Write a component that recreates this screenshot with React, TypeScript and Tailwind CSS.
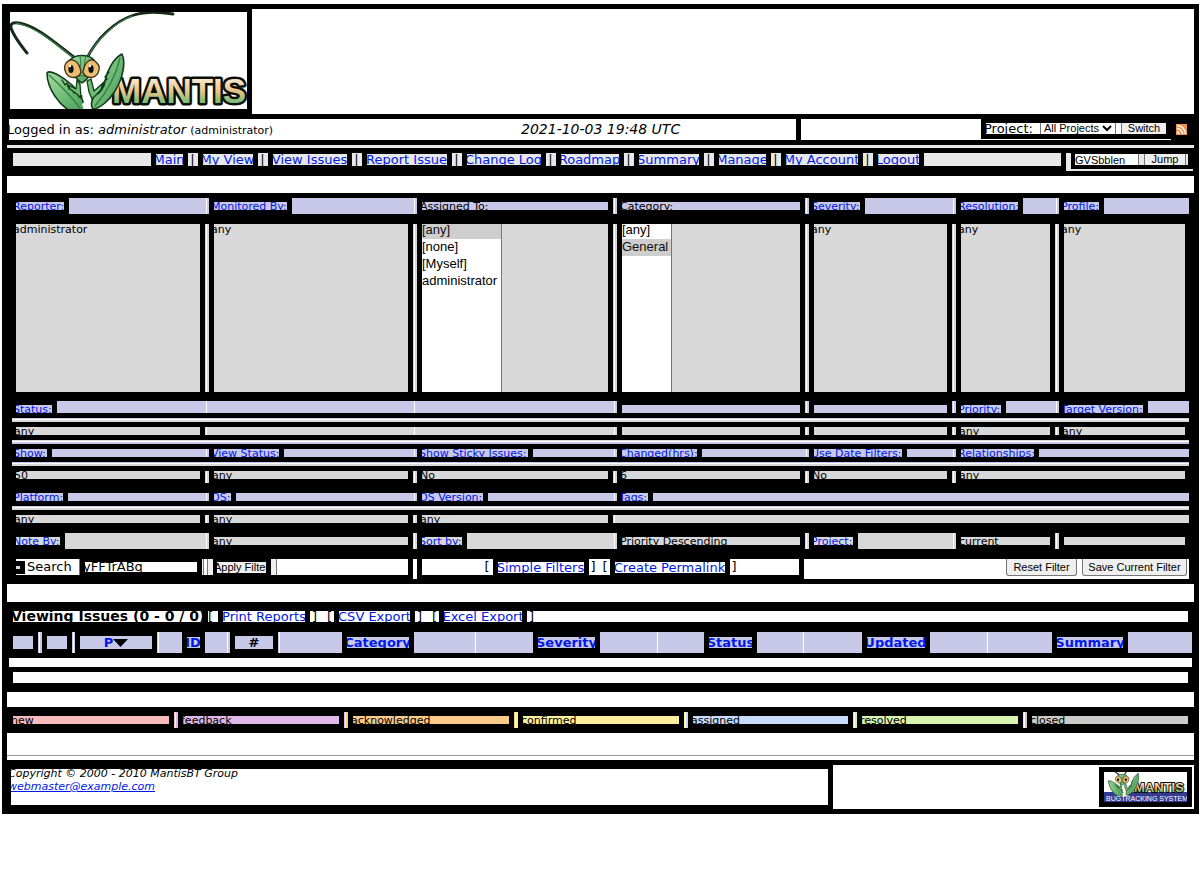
import React from "react";

const LAV = "bg-[#c8c8e8]";
const GRAY = "bg-[#d8d8d8]";
const BAR = "bg-[#e8e8e8]";

type CellData = {
  kind: "link" | "text" | "fill" | "list";
  text?: string;
  w?: string;
  span?: string;
  options?: string[];
  selected?: string;
};

type CellProps = CellData & {
  tone: string;
  first: boolean;
  last: boolean;
  box: string;
};

function Cell({ kind, text, w, span = "", options = [], selected = "", tone, first, last, box }: CellProps) {
  if (kind === "fill") {
    return <div className={`${tone} ${span} ${last ? "" : "border-r border-white"}`} />;
  }
  return (
    <div className={`flex min-w-0 bg-black ${span} ${last ? "" : "border-r border-white"}`}>
      {first ? <div className="w-1 shrink-0" /> : <div className={`mr-[5px] w-0.5 shrink-0 ${tone}`} />}
      {kind === "link" && (
        <>
          <a
            href="#filter"
            className={`flex h-2 shrink-0 items-center overflow-hidden text-[11px] leading-[11px] whitespace-nowrap text-[#0018e8] ${tone} ${w} ${box}`}
          >
            <span className="-ml-[3px]">{text}</span>
          </a>
          <div className={`ml-[5px] grow ${tone}`} />
        </>
      )}
      {kind === "text" && (
        <div className={`flex min-w-0 grow overflow-hidden text-[11px] leading-[11px] whitespace-nowrap ${tone} ${box}`}>
          <span className="-ml-0.5">{text}</span>
        </div>
      )}
      {kind === "list" && (
        <div className={`min-w-0 grow overflow-hidden ${tone}`}>
          <select
            multiple
            aria-label={text}
            defaultValue={[selected]}
            className={`-mt-0.5 block h-[170px] overflow-hidden border-r border-[#767676] bg-white p-0 font-['Liberation_Sans',Arial,sans-serif] text-[13px] leading-[17px] outline-none ${w}`}
          >
            {options.map((o) => (
              <option key={o} className="h-[17px] min-h-0 p-0 leading-[17px]">
                {o}
              </option>
            ))}
          </select>
        </div>
      )}
      {kind !== "link" && (last ? <div className="w-1 shrink-0" /> : <div className={`ml-[5px] w-px shrink-0 ${tone}`} />)}
    </div>
  );
}

type RowProps = { cells: CellData[]; tone: string; height: string; box?: string };

function FilterRow({ cells, tone, height, box = "h-2 items-center self-center" }: RowProps) {
  return (
    <div className={`mx-[5px] grid grid-cols-[195fr_208fr_200fr_192fr_147fr_103fr_132fr] ${height}`}>
      {cells.map((c, i) => (
        <Cell key={i} {...c} tone={tone} first={i === 0} last={i === cells.length - 1} box={box} />
      ))}
    </div>
  );
}

function Rule({ top, bottom }: { top: string; bottom: string }) {
  return (
    <div className="mx-[5px] my-[5px]">
      <div className={`h-px ${top}`} />
      <div className="h-px bg-white" />
      <div className={`h-0.5 ${bottom}`} />
    </div>
  );
}

const link = (text: string, w: string, span?: string): CellData => ({ kind: "link", text, w, span });
const value = (text: string, span?: string): CellData => ({ kind: "text", text, span });
const fill = (span?: string): CellData => ({ kind: "fill", span });

const menu = [
  { t: "Main", w: "w-[27px]" },
  { t: "My View", w: "w-[50px]" },
  { t: "View Issues", w: "w-[74px]" },
  { t: "Report Issue", w: "w-[80px]" },
  { t: "Change Log", w: "w-[74px]" },
  { t: "Roadmap", w: "w-[58px]" },
  { t: "Summary", w: "w-[60px]" },
  { t: "Manage", w: "w-[47px]" },
  { t: "My Account", w: "w-[72px]" },
  { t: "Logout", w: "w-[41px]" },
];

const legend = [
  { t: "new", tone: "bg-[#f8bcbc]" },
  { t: "feedback", tone: "bg-[#ddb8e8]" },
  { t: "acknowledged", tone: "bg-[#fbcb8a]" },
  { t: "confirmed", tone: "bg-[#fff09c]" },
  { t: "assigned", tone: "bg-[#c8dcff]" },
  { t: "resolved", tone: "bg-[#d8f2b0]" },
  { t: "closed", tone: "bg-[#cbcac6]" },
];

const columns = [
  { t: "", col: "w-[31px]", plain: true, w: "" },
  { t: "", col: "w-[34px]", plain: true, w: "" },
  { t: "P", col: "w-[85px]", plain: true, w: "" },
  { t: "ID", col: "w-[69px]", plain: false, w: "w-[13px]" },
  { t: "#", col: "w-[52px]", plain: true, w: "" },
  { t: "Category", col: "w-[196px]", plain: false, w: "w-[62px]" },
  { t: "Severity", col: "w-[182px]", plain: false, w: "w-[57px]" },
  { t: "Status", col: "w-[146px]", plain: false, w: "w-[43px]" },
  { t: "Updated", col: "w-[184px]", plain: false, w: "w-[58px]" },
  { t: "Summary", col: "w-[204px]", plain: false, w: "w-[66px]" },
];

function Clip({ text, w, tone = "bg-white", h = "h-[11px]" }: { text: string; w: string; tone?: string; h?: string }) {
  return (
    <a
      href="#page"
      className={`mx-[5px] flex shrink-0 items-center justify-center self-center overflow-hidden text-[13px] leading-[15px] whitespace-nowrap text-[#0018e8] ${h} ${tone} ${w}`}
    >
      <span>{text}</span>
    </a>
  );
}

function MantisArt() {
  return (
    <g strokeLinecap="round" strokeLinejoin="round">
      <path d="M17 41C10 32 4 25 1 16C0 11 4 10 9 11C27 14 45 31 65 46" fill="none" stroke="#142a18" strokeWidth="3" />
      <path d="M6 11C27 15 45 32 64 46" fill="none" stroke="#3f7d4a" strokeWidth="1.2" />
      <path d="M77 46C86 28 104 9 124 3C137 -1 150 0 163 2" fill="none" stroke="#142a18" strokeWidth="2.8" />
      <path d="M78 44C87 28 104 11 122 4" fill="none" stroke="#3f7d4a" strokeWidth="1.2" />
      <path d="M37 61C40 57 53 65 62 73C66 77 69 80 71 84L73 90C75 96 77 97 79 102L62 100C50 94 37 77 37 61Z" fill="url(#leaf)" stroke="#123c1c" strokeWidth="1.6" />
      <path d="M39 63C49 72 61 84 70 96" fill="none" stroke="#2f7f3e" strokeWidth="1.2" />
      <path d="M52 68l3 5 2-2 2 6 3-2 2 6 3-1 2 5 3-1" fill="none" stroke="#123c1c" strokeWidth="1.4" />
      <path d="M78 87L72 92L75 102L88 102L86 88Z" fill="#fff" stroke="none" />
      <path d="M112 42C116 50 113 66 105 79C99 89 89 97 83 97C80 94 82 86 85 83C92 80 94 75 95 69C97 58 104 46 112 42Z" fill="url(#leaf)" stroke="#123c1c" strokeWidth="1.6" />
      <path d="M110 46C106 64 97 80 85 94" fill="none" stroke="#2f7f3e" strokeWidth="1.2" />
      <path d="M99 60l-4 5 2 2-4 4 1 3-5 3 1 3-5 2" fill="none" stroke="#123c1c" strokeWidth="1.4" />
      <path d="M67 68L70 72L71 86L67 82L60 77L58 73L66 77Z" fill="#70bd74" stroke="#123c1c" strokeWidth="1.3" />
      <path d="M77 69L81 67L84 79L93 71L91 78L82 87L79 80Z" fill="#70bd74" stroke="#123c1c" strokeWidth="1.3" />
      <path d="M60 48C65 42 79 42 84 48C84 58 80 66 72 71C64 66 60 58 60 48Z" fill="url(#leaf)" stroke="#123c1c" strokeWidth="1.4" />
      <path d="M70 44C71 50 71 54 69 58M76 44C74 50 74 54 76 58M64 66Q72 61 81 66" fill="none" stroke="#2f7f3e" strokeWidth="1" />
      <path d="M56 51C61 45 69 48 71 60C69 67 59 67 56 61C54 57 54 54 56 51Z" fill="#edbd74" stroke="#3e2c14" strokeWidth="1.3" />
      <path d="M87 51C82 45 75 48 73 60C75 67 85 67 88 61C90 57 90 54 87 51Z" fill="#edbd74" stroke="#3e2c14" strokeWidth="1.3" />
      <ellipse cx="61" cy="57" rx="2.6" ry="4" fill="#111" />
      <ellipse cx="81" cy="57" rx="2.6" ry="4" fill="#111" />
      <circle cx="60" cy="54" r="1.2" fill="#fff" />
      <circle cx="80" cy="54" r="1.2" fill="#fff" />
    </g>
  );
}

function Word({ size, x, y, stroke }: { size: string; x: number; y: number; stroke: number }) {
  return (
    <text
      x={x}
      y={y}
      className={`font-['Liberation_Sans',Arial,sans-serif] font-bold ${size}`}
      fill="url(#word)"
      stroke="#0c0f08"
      strokeWidth={stroke}
      strokeLinejoin="round"
      paintOrder="stroke"
    >
      MANTIS
    </text>
  );
}

function Logo() {
  return (
    <svg viewBox="0 0 237 97" className="mt-[3px] ml-[3px] h-[97px] w-[237px] shrink-0 bg-white" role="img" aria-label="Mantis">
      <defs>
        <linearGradient id="leaf" x1="0" y1="0" x2="1" y2="1">
          <stop offset="0" stopColor="#a5dca0" />
          <stop offset="1" stopColor="#3d9850" />
        </linearGradient>
        <linearGradient id="word" x1="0" y1="0" x2="0" y2="1">
          <stop offset="0.2" stopColor="#fbe8cf" />
          <stop offset="0.5" stopColor="#edc68c" />
          <stop offset="0.8" stopColor="#78bd78" />
        </linearGradient>
      </defs>
      <Word size="text-[35px]" x={102} y={91} stroke={5} />
      <MantisArt />
    </svg>
  );
}

function FooterLogo() {
  return (
    <svg viewBox="0 0 83 30" className="block h-[30px] w-[83px] bg-white" role="img" aria-label="Mantis Bugtracking System">
      <rect y="20" width="83" height="10" fill="#333a90" />
      <Word size="text-[13px]" x={30} y={20} stroke={2} />
      <svg x="3" y="-1" width="33" height="25" viewBox="33 36 84 62">
        <MantisArt />
      </svg>
      <text x="2" y="29" className="font-['Liberation_Sans',Arial,sans-serif] text-[7px]" fill="#fff">
        BUGTRACKING SYSTEM
      </text>
    </svg>
  );
}

export default function App() {
  return (
    <div className="pt-1 pr-px pl-0.5 font-['DejaVu_Sans',Verdana,sans-serif] text-[13px] text-black">
      <main className="bg-black p-[5px]">
        <header>
          <div className="flex h-[105px]">
            <Logo />
            <div className="ml-[5px] grow bg-white" />
          </div>

          <div className="mt-[5px] ml-0.5 grid h-[21px] grid-cols-[787fr_393fr] gap-[5px]">
            <div className="grid grid-cols-[512fr_275fr] items-center overflow-hidden bg-white whitespace-nowrap">
              <div className="-ml-0.5">
                Logged in as: <i>administrator</i> <span className="text-[11px]">(administrator)</span>
              </div>
              <i className="text-[14px]">2021-10-03 19:48 UTC</i>
            </div>
            <div className="flex">
              <div className="grow bg-white" />
              <form className="flex shrink-0 border-b border-white px-[5px] pt-1" onSubmit={(e) => e.preventDefault()}>
                <div className="flex h-[11px] w-[180px] items-center overflow-hidden bg-white">
                  <label htmlFor="project" className="-ml-0.5 w-14 leading-[15px]">
                    Project:
                  </label>
                  <div className="relative h-[11px] w-[76px] border-x border-[#767676]">
                    <select
                      id="project"
                      className="block h-[11px] w-full appearance-none bg-white pl-[3px] font-['Liberation_Sans',Arial,sans-serif] text-[11px] leading-[11px]"
                    >
                      <option>All Projects</option>
                    </select>
                    <svg viewBox="0 0 10 7" className="pointer-events-none absolute top-0.5 right-[3px] h-[7px] w-[10px]">
                      <path d="M1 1L5 5L9 1" fill="none" stroke="#000" strokeWidth="2" />
                    </svg>
                  </div>
                  <button className="ml-[5px] h-[11px] grow border-l border-[#767676] bg-[#efefef] font-['Liberation_Sans',Arial,sans-serif] text-[11px] leading-[11px]">
                    Switch
                  </button>
                </div>
              </form>
              <svg viewBox="0 0 11 11" className="mt-[5px] mr-[7px] ml-[5px] h-[11px] w-[11px] shrink-0" role="img" aria-label="RSS">
                <rect width="11" height="11" fill="#ee924c" />
                <circle cx="2.3" cy="8.7" r="1.2" fill="#fff" />
                <path d="M1 4.5A5.5 5.5 0 0 1 6.5 10M1 1.5A8.5 8.5 0 0 1 9.5 10" fill="none" stroke="#fff" strokeWidth="1.4" />
              </svg>
            </div>
          </div>

          <div className={`mt-[5px] h-[3px] ${BAR}`} />

          <div className="mt-[5px] ml-1.5 flex h-[18px]">
            <nav className="flex h-[13px] grow">
              <div className={`grow ${BAR}`} />
              {menu.map((m, i) => (
                <React.Fragment key={m.t}>
                  {i > 0 && (
                    <div className={`flex w-2.5 shrink-0 justify-center overflow-hidden ${BAR}`}>
                      <span className="leading-[13px]">|</span>
                    </div>
                  )}
                  <Clip text={m.t} w={m.w} tone={BAR} />
                </React.Fragment>
              ))}
              <div className={`grow ${BAR}`} />
            </nav>
            <form
              className="mr-px ml-[5px] w-[127px] shrink-0 border-b-2 border-l-[5px] border-[#e8e8e8] pt-px pl-1"
              onSubmit={(e) => e.preventDefault()}
            >
              <div className={`flex h-[11px] w-[113px] ${BAR}`}>
                <input
                  aria-label="Issue number"
                  defaultValue="GVSbblen"
                  className="h-[11px] w-16 border-r border-[#767676] bg-white p-0 font-['Liberation_Sans',Arial,sans-serif] text-[11px] leading-[11px] outline-none"
                />
                <button className="ml-[5px] h-[11px] w-[42px] border-x border-[#767676] bg-[#efefef] font-['Liberation_Sans',Arial,sans-serif] text-[11px] leading-[11px]">
                  Jump
                </button>
              </div>
            </form>
          </div>
        </header>

        <div className="mt-[5px] h-[17px] bg-white" />

        <section className="mt-[5px]">
          <FilterRow
            tone={LAV}
            height="h-4"
            cells={[
              link("Reporter:", "w-[48px]"),
              link("Monitored By:", "w-[73px]"),
              value("Assigned To:"),
              value("Category:"),
              link("Severity:", "w-[46px]"),
              link("Resolution:", "w-[57px]"),
              link("Profile:", "w-[35px]"),
            ]}
          />
          <div className="h-2.5" />
          <FilterRow
            tone={GRAY}
            height="h-[167px]"
            box="items-start -indent-px"
            cells={[
              value("administrator"),
              value("any"),
              { kind: "list", text: "Assigned To", w: "w-[80px]", options: ["[any]", "[none]", "[Myself]", "administrator"], selected: "[any]" },
              { kind: "list", text: "Category", w: "w-[50px]", options: ["[any]", "General"], selected: "General" },
              value("any"),
              value("any"),
              value("any"),
            ]}
          />
          <div className="h-2.5" />
          <FilterRow
            tone={LAV}
            height="h-3"
            box="h-2 items-center self-end"
            cells={[
              link("Status:", "w-[36px]"),
              fill(),
              fill(),
              value(""),
              value(""),
              link("Priority:", "w-[40px]"),
              link("Target Version:", "w-[79px]"),
            ]}
          />
          <Rule top={LAV} bottom={GRAY} />
          <FilterRow tone={GRAY} height="h-2" cells={[value("any"), fill(), fill(), value(""), value(""), value("any"), value("any")]} />
          <Rule top={GRAY} bottom={LAV} />
          <FilterRow
            tone={LAV}
            height="h-2"
            cells={[
              link("Show:", "w-[31px]"),
              link("View Status:", "w-[65px]"),
              link("Show Sticky Issues:", "w-[106px]"),
              link("Changed(hrs):", "w-[75px]"),
              link("Use Date Filters:", "w-[88px]"),
              link("Relationships:", "w-[73px]", "col-span-2"),
            ]}
          />
          <Rule top={LAV} bottom={GRAY} />
          <FilterRow
            tone={GRAY}
            height="h-3"
            box="h-2 items-center self-start"
            cells={[value("50"), value("any"), value("No"), value("6"), value("No"), value("any", "col-span-2")]}
          />
          <div className="h-2.5" />
          <FilterRow
            tone={LAV}
            height="h-2"
            cells={[
              link("Platform:", "w-[47px]"),
              link("OS:", "w-[17px]"),
              link("OS Version:", "w-[61px]"),
              link("Tags:", "w-[26px]", "col-span-4"),
            ]}
          />
          <Rule top={LAV} bottom={GRAY} />
          <FilterRow tone={GRAY} height="h-2" cells={[value("any"), value("any"), value("any"), fill("col-span-4")]} />
          <div className="h-2.5" />
          <FilterRow
            tone={GRAY}
            height="h-4"
            cells={[
              link("Note By:", "w-[44px]"),
              value("any"),
              link("Sort by:", "w-[40px]"),
              value("Priority Descending"),
              link("Project:", "w-[39px]"),
              value("current"),
              value(""),
            ]}
          />
          <form
            className="mx-[5px] mt-2.5 grid h-5 grid-cols-[401fr_391fr_385fr] whitespace-nowrap"
            onSubmit={(e) => e.preventDefault()}
          >
            <div className="flex h-4 pr-[5px] pl-1">
              <label htmlFor="search" className="flex w-16 shrink-0 items-center border-r border-[#767676] bg-white leading-4">
                <span className="mr-0.5 flex h-[13px] w-[9px] items-center bg-black">
                  <span className="h-[3px] w-1 bg-[#d8d8d8]" />
                </span>
                Search
              </label>
              <input
                id="search"
                defaultValue="yFFTrABq"
                className="mx-[5px] h-2.5 w-28 self-center bg-white p-0 -indent-0.5 text-[13px] leading-[14px] outline-none"
              />
              <div className="flex w-[11px] shrink-0 bg-[#efefef]">
                <div className="ml-px h-4 w-[5px] border-x border-[#767676] bg-white" />
              </div>
              <button className="mr-[5px] ml-1 flex h-[11px] w-[49px] shrink-0 items-center justify-center self-center overflow-hidden bg-[#efefef] font-['Liberation_Sans',Arial,sans-serif] text-[11px] leading-[11px]">
                Apply Filter
              </button>
              <div className="w-1.5 shrink-0 border-r border-[#767676] bg-[#efefef]" />
              <div className="grow bg-white" />
            </div>
            <div className="flex">
              <div className="mr-[5px] w-1 bg-white" />
              <div className="flex h-4 grow pr-[5px] leading-4">
                <div className="grow bg-white pr-[3px] text-right">[</div>
                <Clip text="Simple Filters" w="w-[86px]" />
                <div className="flex w-[21px] shrink-0 justify-between bg-white px-0.5">
                  <span>]</span>
                  <span>[</span>
                </div>
                <Clip text="Create Permalink" w="w-[110px]" />
                <div className="grow bg-white pl-0.5">]</div>
              </div>
            </div>
            <div className="flex items-start justify-end gap-[5px] bg-white pr-0.5 font-['Liberation_Sans',Arial,sans-serif] text-[11px] leading-4">
              <button className="h-[17px] w-[71px] rounded-b-[3px] border border-t-0 border-[#767676] bg-[#efefef]">Reset Filter</button>
              <button className="h-[17px] w-[105px] rounded-b-[3px] border border-t-0 border-[#767676] bg-[#efefef]">
                Save Current Filter
              </button>
            </div>
          </form>
        </section>

        <div className="mt-[5px] h-[18px] bg-white" />

        <section className="px-0.5">
          <div className="mx-1 mt-[9px] flex h-[11px] leading-[11px] whitespace-nowrap">
            <h2 className="flex w-[190px] shrink-0 items-center overflow-hidden bg-white text-[14px] font-bold">
              <span className="-ml-0.5">Viewing Issues (0 - 0 / 0)</span>
            </h2>
            <span className="ml-[5px] w-2.5 shrink-0 bg-white">[</span>
            <Clip text="Print Reports" w="w-[82px]" />
            <span className="flex w-6 shrink-0 justify-between bg-white px-0.5">
              <span>]</span>
              <span>[</span>
            </span>
            <Clip text="CSV Export" w="w-[71px]" />
            <span className="flex w-6 shrink-0 justify-between bg-white px-0.5">
              <span>]</span>
              <span>[</span>
            </span>
            <Clip text="Excel Export" w="w-[78px]" />
            <span className="grow bg-white pl-0.5">]</span>
          </div>

          <table className="mt-2.5 w-full table-fixed border-collapse">
            <thead>
              <tr>
                {columns.map((c, i) => (
                  <th key={i} className={`p-0 ${c.col}`}>
                    <div className={`flex h-[21px] ${i < columns.length - 1 ? "border-r border-white" : ""}`}>
                      {c.plain ? (
                        <>
                          <div className={i === 0 ? "w-1 shrink-0" : `mr-[5px] shrink-0 ${i === 2 ? "w-px" : "w-0.5"} ${LAV}`} />
                          <div className={`flex h-[13px] grow items-center justify-center self-center overflow-hidden leading-[15px] ${LAV}`}>
                            {c.t === "P" ? (
                              <a href="#sort" className="flex items-center text-[#0018e8]">
                                P
                                <svg viewBox="0 0 15 8" className="h-2 w-[15px]">
                                  <path d="M0 0H15L7.5 8Z" fill="#000" />
                                </svg>
                              </a>
                            ) : (
                              c.t
                            )}
                          </div>
                          <div className={`ml-[5px] w-px shrink-0 ${LAV}`} />
                        </>
                      ) : (
                        <>
                          <div className={`grow ${LAV}`} />
                          <Clip text={c.t} w={c.w} tone={LAV} />
                          <div className={`grow ${LAV}`} />
                        </>
                      )}
                    </div>
                  </th>
                ))}
              </tr>
            </thead>
            <tbody>
              <tr>
                <td colSpan={10} className="p-0 pt-[5px]">
                  <div className="h-[9px] bg-white" />
                </td>
              </tr>
              <tr>
                <td colSpan={10} className="px-1 pt-[5px] pb-[9px]">
                  <div className="h-[11px] bg-white" />
                </td>
              </tr>
            </tbody>
          </table>
        </section>

        <div className="h-[15px] bg-white" />

        <section className="mx-0.5 my-[5px] grid h-4 grid-cols-[167fr_170fr_170fr_170fr_169fr_170fr_167fr]">
          {legend.map((s, i) => (
            <Cell
              key={s.t}
              kind="text"
              text={s.t}
              tone={s.tone}
              first={i === 0}
              last={i === legend.length - 1}
              box="h-2 items-center self-center"
            />
          ))}
        </section>

        <div className="h-[27px] bg-white pt-[22px]">
          <hr className="border-t border-[#999999]" />
        </div>

        <footer className="mt-[5px] flex h-11">
          <div className="mt-1 ml-1 h-9 grow overflow-hidden bg-white text-[11px] leading-[13px] whitespace-nowrap italic">
            <address className="-mt-0.5 -ml-[3px]">
              Copyright © 2000 - 2010 MantisBT Group
              <br />
              <a href="mailto:webmaster@example.com" className="text-[#0018e8] underline">
                webmaster@example.com
              </a>
            </address>
          </div>
          <div className="ml-[5px] flex w-[361px] shrink-0 items-start justify-end bg-white pt-0.5 pr-0.5">
            <div className="bg-black p-[5px]">
              <FooterLogo />
            </div>
          </div>
        </footer>
      </main>
    </div>
  );
}
